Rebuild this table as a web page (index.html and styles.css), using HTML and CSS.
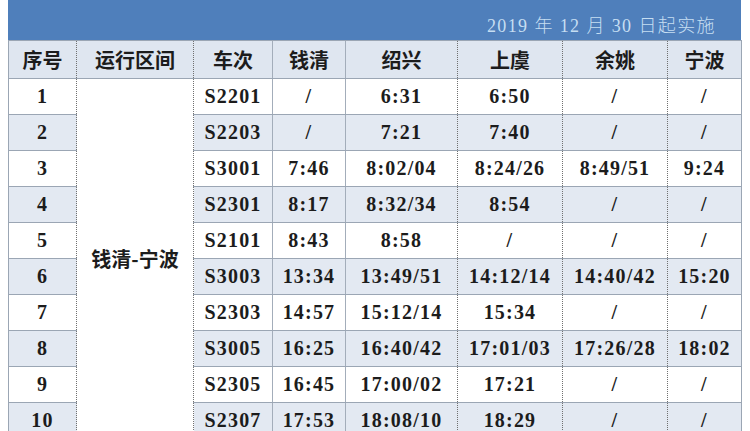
FILE: index.html
```html
<!DOCTYPE html>
<html lang="zh">
<head>
<meta charset="utf-8">
<link rel="stylesheet" href="styles.css">
</head>
<body>
<div class="sheet">
  <div class="banner"><span class="date">2019 年 12 月 30 日起实施</span></div>
  <table class="timetable">
    <colgroup>
      <col class="c-no"><col class="c-route"><col class="c-train"><col class="c-qq">
      <col class="c-sx"><col class="c-sy"><col class="c-yy"><col class="c-nb">
    </colgroup>
    <thead>
      <tr><th>序号</th><th>运行区间</th><th>车次</th><th class="solid">钱清</th><th class="solid">绍兴</th><th>上虞</th><th>余姚</th><th>宁波</th></tr>
    </thead>
    <tbody>
      <tr class="odd"><td>1</td><td class="route" rowspan="10">钱清-宁波</td><td>S2201</td><td class="solid">/</td><td class="solid">6:31</td><td>6:50</td><td>/</td><td>/</td></tr>
      <tr class="even"><td>2</td><td>S2203</td><td class="solid">/</td><td class="solid">7:21</td><td>7:40</td><td>/</td><td>/</td></tr>
      <tr class="odd"><td>3</td><td>S3001</td><td class="solid">7:46</td><td class="solid">8:02/04</td><td>8:24/26</td><td>8:49/51</td><td>9:24</td></tr>
      <tr class="even"><td>4</td><td>S2301</td><td class="solid">8:17</td><td class="solid">8:32/34</td><td>8:54</td><td>/</td><td>/</td></tr>
      <tr class="odd"><td>5</td><td>S2101</td><td class="solid">8:43</td><td class="solid">8:58</td><td>/</td><td>/</td><td>/</td></tr>
      <tr class="even"><td>6</td><td>S3003</td><td class="solid">13:34</td><td class="solid">13:49/51</td><td>14:12/14</td><td>14:40/42</td><td>15:20</td></tr>
      <tr class="odd"><td>7</td><td>S2303</td><td class="solid">14:57</td><td class="solid">15:12/14</td><td>15:34</td><td>/</td><td>/</td></tr>
      <tr class="even"><td>8</td><td>S3005</td><td class="solid">16:25</td><td class="solid">16:40/42</td><td>17:01/03</td><td>17:26/28</td><td>18:02</td></tr>
      <tr class="odd"><td>9</td><td>S2305</td><td class="solid">16:45</td><td class="solid">17:00/02</td><td>17:21</td><td>/</td><td>/</td></tr>
      <tr class="even"><td>10</td><td>S2307</td><td class="solid">17:53</td><td class="solid">18:08/10</td><td>18:29</td><td>/</td><td>/</td></tr>
    </tbody>
  </table>
</div>
</body>
</html>
```
FILE: styles.css
```css
html, body {
  margin: 0;
  padding: 0;
  background: #ffffff;
  overflow: hidden;
}
body {
  width: 750px;
  height: 431px;
}
.sheet {
  margin-left: 8px;
  width: 733px;
}
.banner {
  height: 40px;
  background: #4f7fbb;
  display: flex;
  justify-content: flex-end;
  align-items: flex-end;
  padding: 0 25px 2px 0;
  box-sizing: border-box;
}
.date {
  font-family: "Liberation Serif", "Noto Sans CJK SC", serif;
  font-size: 18px;
  font-weight: 300;
  color: #c6def2;
  letter-spacing: 1.4px;
  line-height: 24px;
}
.timetable {
  width: 733px;
  table-layout: fixed;
  border-collapse: collapse;
  font-family: "Liberation Serif", "Noto Sans CJK SC", serif;
  font-size: 20px;
  font-weight: bold;
  color: #1c1c1c;
}
.c-no { width: 68px; }
.c-route { width: 117px; }
.c-train { width: 79px; }
.c-qq { width: 73px; }
.c-sx { width: 112px; }
.c-sy { width: 105px; }
.c-yy { width: 105px; }
.c-nb { width: 74px; }
.timetable th,
.timetable td {
  padding: 0;
  text-align: center;
  vertical-align: middle;
  border-top: 1px solid #9ba6b4;
  border-bottom: 1px solid #9ba6b4;
  border-left: 1px dotted #707070;
  border-right: 1px dotted #707070;
  letter-spacing: 1.2px;
  white-space: nowrap;
}
.timetable th {
  height: 37px;
  background: #dfe6f0;
  font-family: "Noto Sans CJK SC", sans-serif;
  font-weight: bold;
  font-size: 20px;
  letter-spacing: 0;
}
.timetable tr > :first-child {
  border-left: 1px solid #9ba6b4;
}
.timetable tr > :last-child {
  border-right: 1px solid #9ba6b4;
}
.timetable .solid {
  border-left: 1px solid #a3adba;
}
.timetable td {
  height: 35px;
}
.odd td { background: #ffffff; }
.even td { background: #e3e9f2; }
.timetable td.route {
  background: #ffffff;
  font-family: "Noto Sans CJK SC", sans-serif;
  font-weight: bold;
  letter-spacing: 0;
}
```
